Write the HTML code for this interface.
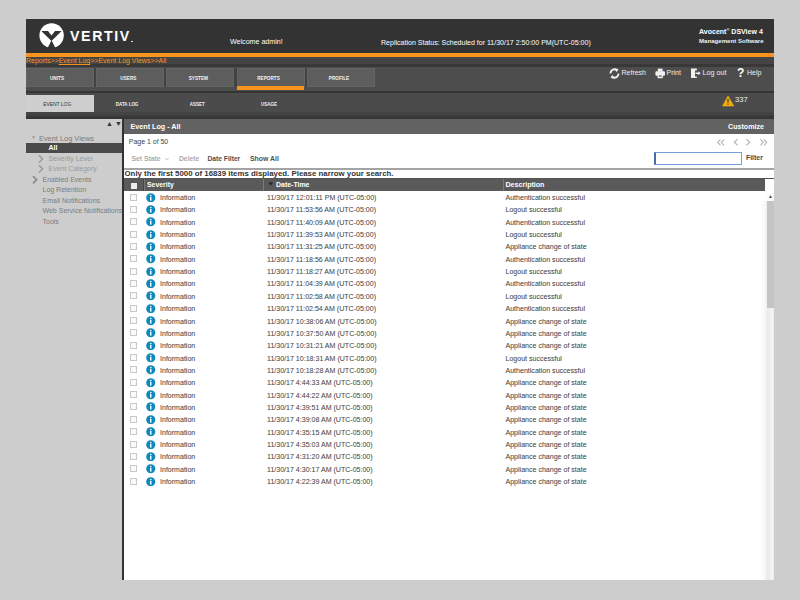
<!DOCTYPE html>
<html><head><meta charset="utf-8">
<style>
*{margin:0;padding:0;box-sizing:border-box}
html,body{width:800px;height:600px;overflow:hidden;background:#cdcdcd;font-family:"Liberation Sans",sans-serif;position:relative}
.a{position:absolute}
.t{position:absolute;white-space:nowrap;line-height:1}
.row{position:absolute;left:124px;width:642px;height:12px}
.row .cb{position:absolute;left:6px;top:2.5px;width:7px;height:7px;border:1px solid #c8c8c8;background:#fafafa}
.row .ico{position:absolute;left:22.2px;top:1.5px;width:9.5px;height:9.5px}
.row span{position:absolute;top:3px;font-size:7.05px;color:#555;text-shadow:0 0 0.6px rgba(80,80,80,0.35);line-height:1;white-space:nowrap}
.row .sev{left:36px}
.row .dt{left:143px}
.row .ds{left:381.5px}
.tab{position:absolute;top:67.5px;height:19.5px;width:68px;background:#5d5d5d;border:1px solid #646464;color:#f4f4f4;font-size:6px;font-weight:bold;text-align:center;line-height:19.5px;padding-right:4px}
.tab b{display:inline-block;transform:scaleX(0.78)}
.sub{position:absolute;top:95px;height:17px;color:#f2f2f2;font-size:5.6px;font-weight:bold;text-align:center;line-height:18.5px;padding-right:5px}
.sub b{display:inline-block;transform:scaleX(0.8)}
.nl{position:absolute;left:42.5px;font-size:7px;color:#7c7c7c;white-space:nowrap;line-height:1}
</style></head><body>
<!-- header -->
<div class="a" style="left:26px;top:19px;width:748px;height:34px;background:#333"></div>
<svg class="a" style="left:36px;top:21px" width="30" height="30" viewBox="36 21 30 30">
 <circle cx="51.6" cy="35.5" r="12.2" fill="#fff"/>
 <polygon points="41.3,31 48,31 51.5,35.6 55,31 61.6,31 51.5,41" fill="#333"/>
 <polygon points="51.5,40.2 47.4,48.5 55.6,48.5" fill="#333"/>
</svg>
<div class="t" style="left:70px;top:28.6px;font-size:14.2px;font-weight:bold;color:#fff;letter-spacing:1.6px">VERTIV</div>
<div class="a" style="left:131px;top:40.5px;width:1.5px;height:1.5px;background:#ddd"></div>
<div class="t" style="left:230px;top:39px;font-size:7.1px;color:#fff">Welcome admin!</div>
<div class="t" style="left:381px;top:38.5px;font-size:7.04px;color:#fff">Replication Status: Scheduled for 11/30/17 2:50:00 PM(UTC-05:00)</div>
<div class="t" style="left:699px;top:28px;font-size:7.02px;font-weight:bold;color:#fff">Avocent<sup style="font-size:4px">®</sup> DSView 4</div>
<div class="t" style="left:699px;top:38.3px;font-size:6px;font-weight:bold;color:#f4f4f4;letter-spacing:0.05px">Management Software</div>
<!-- orange -->
<div class="a" style="left:26px;top:53.3px;width:748px;height:3.5px;background:#f7941d"></div>
<div class="a" style="left:26px;top:56.5px;width:748px;height:9px;background:#444"></div>
<div class="a" style="left:26px;top:64.3px;width:748px;height:3.2px;background:#383838"></div>
<div class="t" style="left:26px;top:57px;font-size:7px;color:#f7941d">Reports&gt;&gt;<u>Event Log</u>&gt;&gt;Event Log Views&gt;&gt;All</div>
<!-- nav band -->
<div class="a" style="left:26px;top:67px;width:748px;height:24px;background:#4d4d4d"></div>
<div class="tab" style="left:26px;padding-right:6px"><b>UNITS</b></div>
<div class="tab" style="left:96px"><b>USERS</b></div>
<div class="tab" style="left:166px"><b>SYSTEM</b></div>
<div class="tab" style="left:237px"><b>REPORTS</b></div>
<div class="a" style="left:237px;top:86px;width:67px;height:3.5px;background:#f7941d"></div>
<div class="tab" style="left:307px"><b>PROFILE</b></div>
<div class="a" style="left:94px;top:68px;width:2px;height:19px;background:#424242"></div><div class="a" style="left:164px;top:68px;width:2px;height:19px;background:#424242"></div><div class="a" style="left:234px;top:68px;width:3px;height:19px;background:#424242"></div><div class="a" style="left:305px;top:68px;width:2px;height:19px;background:#424242"></div>
<div class="a" style="left:26px;top:90.7px;width:748px;height:2.2px;background:#353535"></div>
<!-- right tools -->
<svg class="a" style="left:609px;top:68px" width="11" height="11" viewBox="0 0 11 11"><path d="M7.6 1.9 A4 4 0 0 0 1.5 5.5" fill="none" stroke="#eee" stroke-width="1.9"/><path d="M3.4 9.1 A4 4 0 0 0 9.5 5.5" fill="none" stroke="#eee" stroke-width="1.9"/><path d="M6.2 0.2 L9.6 1.6 L7.2 4.2 Z" fill="#eee"/><path d="M4.8 10.8 L1.4 9.4 L3.8 6.8 Z" fill="#eee"/></svg>
<div class="t" style="left:621.5px;top:68.5px;font-size:7px;color:#eee">Refresh</div>
<svg class="a" style="left:655px;top:68px" width="11" height="11" viewBox="0 0 11 11"><rect x="2.8" y="0.6" width="4.8" height="3" fill="#f0f0f0"/><rect x="0.4" y="3.2" width="9.6" height="4.6" rx="1.2" fill="#f0f0f0"/><rect x="2.6" y="6.2" width="5.2" height="4" fill="#f0f0f0"/><rect x="3.8" y="7.2" width="2.8" height="1.6" fill="#777"/></svg>
<div class="t" style="left:666.5px;top:68.5px;font-size:7px;color:#eee">Print</div>
<svg class="a" style="left:690px;top:68px" width="12" height="11" viewBox="0 0 12 11"><path d="M1 0.5 H6.8 V2.6 H5 V8.4 H6.8 V10 H1 Z" fill="#f0f0f0"/><path d="M5.5 5.3 H9.5" stroke="#f0f0f0" stroke-width="1.5"/><path d="M8.3 3.3 L10.6 5.3 L8.3 7.3 Z" fill="#f0f0f0"/></svg>
<div class="t" style="left:702.5px;top:68.5px;font-size:7.19px;color:#eee">Log out</div>
<div class="t" style="left:737px;top:67px;font-size:12px;font-weight:bold;color:#fff">?</div>
<div class="t" style="left:747px;top:68.5px;font-size:7px;color:#eee">Help</div>
<!-- sub band -->
<div class="a" style="left:26px;top:93px;width:748px;height:20px;background:#4b4b4b"></div>
<div class="a" style="left:26px;top:94.8px;width:67.5px;height:17px;background:#cfcfcf"></div>
<div class="sub" style="left:26px;width:67.5px;color:#333;font-weight:normal;font-size:4.9px;line-height:19px">EVENT LOG</div>
<div class="sub" style="left:96px;width:68px"><b>DATA LOG</b></div>
<div class="sub" style="left:166px;width:68px"><b>ASSET</b></div>
<div class="sub" style="left:237px;width:68px"><b>USAGE</b></div>
<svg class="a" style="left:722px;top:95px" width="12" height="12" viewBox="0 0 12 12"><path d="M6 1 L11.8 11 L0.5 11 Z" fill="#f2ad0c" stroke="#f2ad0c" stroke-width="0.6" stroke-linejoin="round"/><path d="M5.3 4 L6.7 4 L6.4 8 L5.6 8 Z" fill="#3a3a3a"/><rect x="5.45" y="8.6" width="1.1" height="1.1" fill="#3a3a3a"/></svg>
<div class="t" style="left:735px;top:95.8px;font-size:7.6px;color:#eee">337</div>
<div class="a" style="left:26px;top:112px;width:748px;height:7px;background:linear-gradient(#444 0px,#444 2px,#3c3c3c 4px,#363636 5px,#363636 7px)"></div>
<!-- sidebar -->
<div class="a" style="left:26px;top:119px;width:96px;height:461px;background:#cdcdcd"></div>
<div class="t" style="left:106px;top:120px;font-size:7px;color:#333">&#9650;</div>
<div class="t" style="left:115px;top:120px;font-size:7px;color:#333">&#9660;</div>
<div class="t" style="left:31px;top:134.5px;font-size:5px;color:#999">&#9660;</div>
<div class="t" style="left:39px;top:134.5px;font-size:7.4px;color:#7c7c7c">Event Log Views</div>
<div class="a" style="left:26px;top:143px;width:96px;height:9.5px;background:#4a4a4a"></div>
<div class="t" style="left:48.5px;top:144.3px;font-size:7px;font-weight:bold;color:#fff">All</div>
<svg class="a" style="left:38px;top:154px" width="6" height="10" viewBox="0 0 6 10"><path d="M1 1.2 L4.6 4.8 L1 8.4" fill="none" stroke="#999" stroke-width="1.4"/></svg>
<div class="nl" style="left:48.5px;top:154.5px;color:#9a9a9a">Severity Level</div>
<svg class="a" style="left:38px;top:163.8px" width="6" height="10" viewBox="0 0 6 10"><path d="M1 1.2 L4.6 4.8 L1 8.4" fill="none" stroke="#999" stroke-width="1.4"/></svg>
<div class="nl" style="left:48.5px;top:165px;color:#9a9a9a">Event Category</div>
<svg class="a" style="left:31.5px;top:174.6px" width="6" height="10" viewBox="0 0 6 10"><path d="M1 1.2 L4.6 4.8 L1 8.4" fill="none" stroke="#858585" stroke-width="1.6"/></svg>
<div class="nl" style="top:175.5px">Enabled Events</div>
<div class="nl" style="top:186px">Log Retention</div>
<div class="nl" style="top:196.5px">Email Notifications</div>
<div class="nl" style="top:207px">Web Service Notifications</div>
<div class="nl" style="top:217.5px">Tools</div>
<!-- separator -->
<div class="a" style="left:122px;top:119px;width:2.3px;height:461px;background:#333"></div>
<!-- main panel -->
<div class="a" style="left:124px;top:119px;width:650px;height:461px;background:#fff"></div>
<div class="a" style="left:124px;top:119px;width:650px;height:14.5px;background:#626262"></div>
<div class="t" style="left:130.5px;top:124px;font-size:7.18px;font-weight:bold;color:#fff">Event Log - All</div>
<div class="t" style="left:728px;top:124px;font-size:7.12px;font-weight:bold;color:#fff">Customize</div>
<div class="t" style="left:128.8px;top:138.6px;font-size:6.96px;color:#444">Page 1 of 50</div>




<svg class="a" style="left:715px;top:138px" width="55" height="9" viewBox="715 138 55 9"><g fill="none" stroke="#b8b8b8" stroke-width="1.25"><path d="M720.5 139.3 L717.8 142.3 L720.5 145.3 M724 139.3 L721.3 142.3 L724 145.3"/><path d="M737.5 139.3 L734.3 142.3 L737.5 145.3"/><path d="M746.5 139.3 L749.7 142.3 L746.5 145.3"/><path d="M760.5 139.3 L763.2 142.3 L760.5 145.3 M764 139.3 L766.7 142.3 L764 145.3"/></g></svg>
<div class="t" style="left:131.5px;top:155.5px;font-size:6.8px;font-weight:bold;color:#acacac">Set State</div><svg class="a" style="left:164.5px;top:157px" width="4" height="4" viewBox="0 0 4 4"><path d="M0.3 1 L2 2.8 L3.7 1" fill="none" stroke="#b4b4b4" stroke-width="0.9"/></svg>
<div class="t" style="left:179px;top:155.5px;font-size:6.75px;font-weight:bold;color:#acacac">Delete</div>
<div class="t" style="left:207.5px;top:155.7px;font-size:6.7px;font-weight:bold;color:#505050">Date Filter</div>
<div class="t" style="left:250px;top:155.7px;font-size:6.9px;font-weight:bold;color:#505050">Show All</div>
<div class="a" style="left:654px;top:152px;width:88px;height:12.5px;border:1.5px solid #78a0d8;border-left:2px solid #4a6aa8;background:#fff"></div>
<div class="t" style="left:746px;top:155.3px;font-size:6.9px;font-weight:bold;color:#484848">Filter</div>
<div class="a" style="left:124px;top:168px;width:650px;height:1.5px;background:#a4a4a4"></div>
<div class="t" style="left:124.5px;top:169.5px;font-size:7.85px;font-weight:bold;color:#333">Only the first 5000 of 16839 items displayed. Please narrow your search.</div>
<!-- table header -->
<div class="a" style="left:124px;top:178px;width:650px;height:1px;background:#555"></div>
<div class="a" style="left:124px;top:178.5px;width:641px;height:12.5px;background:#5a5a5a"></div>
<div class="a" style="left:143px;top:178.5px;width:1px;height:12.5px;background:#444"></div><div class="a" style="left:144px;top:178.5px;width:1px;height:12.5px;background:#777"></div>
<div class="a" style="left:263px;top:178.5px;width:1.2px;height:12.5px;background:#7a7a7a"></div>
<div class="a" style="left:503px;top:178.5px;width:1.2px;height:12.5px;background:#7a7a7a"></div>
<div class="a" style="left:131px;top:182.5px;width:6px;height:6px;background:#eee"></div>
<div class="t" style="left:147px;top:181.8px;font-size:6.9px;font-weight:bold;color:#fff">Severity</div>
<svg class="a" style="left:268px;top:182px" width="6" height="5" viewBox="0 0 6 5"><path d="M0.4 0.3 L5.2 0.3 L2.8 3.8 Z" fill="#2a2a2a"/></svg>
<div class="t" style="left:276px;top:181.8px;font-size:6.96px;font-weight:bold;color:#fff">Date-Time</div>
<div class="t" style="left:505.5px;top:181.8px;font-size:7.09px;font-weight:bold;color:#fff">Description</div>
<!-- scrollbar -->
<div class="a" style="left:760px;top:201px;width:14px;height:379px;background:linear-gradient(90deg,rgba(255,255,255,0) 0px,#fafafa 3px,#f6f6f6 5.5px,#ececec 7px,#ededed 10px,#f4f4f4 11.5px,#f3f3f3 13px,#e8e8e8 14px)"></div>
<div class="a" style="left:766.5px;top:192.5px;width:7.5px;height:8.5px;background:#fafafa"></div>
<div class="t" style="left:768px;top:193.5px;font-size:5px;color:#555">&#9650;</div>
<div class="a" style="left:767px;top:201px;width:7px;height:107px;background:#c4c4c4"></div>
<div class="row" style="top:191.00px"><i class="cb"></i><svg class="ico" viewBox="0 0 10 10"><circle cx="5" cy="5" r="4.8" fill="#0f89b9"/><circle cx="5" cy="2.6" r="0.85" fill="#fff"/><rect x="4.25" y="4" width="1.5" height="4" fill="#fff"/></svg><span class="sev">Information</span><span class="dt">11/30/17 12:01:11 PM (UTC-05:00)</span><span class="ds">Authentication successful</span></div>
<div class="row" style="top:203.35px"><i class="cb"></i><svg class="ico" viewBox="0 0 10 10"><circle cx="5" cy="5" r="4.8" fill="#0f89b9"/><circle cx="5" cy="2.6" r="0.85" fill="#fff"/><rect x="4.25" y="4" width="1.5" height="4" fill="#fff"/></svg><span class="sev">Information</span><span class="dt">11/30/17 11:53:56 AM (UTC-05:00)</span><span class="ds">Logout successful</span></div>
<div class="row" style="top:215.70px"><i class="cb"></i><svg class="ico" viewBox="0 0 10 10"><circle cx="5" cy="5" r="4.8" fill="#0f89b9"/><circle cx="5" cy="2.6" r="0.85" fill="#fff"/><rect x="4.25" y="4" width="1.5" height="4" fill="#fff"/></svg><span class="sev">Information</span><span class="dt">11/30/17 11:40:09 AM (UTC-05:00)</span><span class="ds">Authentication successful</span></div>
<div class="row" style="top:228.05px"><i class="cb"></i><svg class="ico" viewBox="0 0 10 10"><circle cx="5" cy="5" r="4.8" fill="#0f89b9"/><circle cx="5" cy="2.6" r="0.85" fill="#fff"/><rect x="4.25" y="4" width="1.5" height="4" fill="#fff"/></svg><span class="sev">Information</span><span class="dt">11/30/17 11:39:53 AM (UTC-05:00)</span><span class="ds">Logout successful</span></div>
<div class="row" style="top:240.40px"><i class="cb"></i><svg class="ico" viewBox="0 0 10 10"><circle cx="5" cy="5" r="4.8" fill="#0f89b9"/><circle cx="5" cy="2.6" r="0.85" fill="#fff"/><rect x="4.25" y="4" width="1.5" height="4" fill="#fff"/></svg><span class="sev">Information</span><span class="dt">11/30/17 11:31:25 AM (UTC-05:00)</span><span class="ds">Appliance change of state</span></div>
<div class="row" style="top:252.75px"><i class="cb"></i><svg class="ico" viewBox="0 0 10 10"><circle cx="5" cy="5" r="4.8" fill="#0f89b9"/><circle cx="5" cy="2.6" r="0.85" fill="#fff"/><rect x="4.25" y="4" width="1.5" height="4" fill="#fff"/></svg><span class="sev">Information</span><span class="dt">11/30/17 11:18:56 AM (UTC-05:00)</span><span class="ds">Authentication successful</span></div>
<div class="row" style="top:265.10px"><i class="cb"></i><svg class="ico" viewBox="0 0 10 10"><circle cx="5" cy="5" r="4.8" fill="#0f89b9"/><circle cx="5" cy="2.6" r="0.85" fill="#fff"/><rect x="4.25" y="4" width="1.5" height="4" fill="#fff"/></svg><span class="sev">Information</span><span class="dt">11/30/17 11:18:27 AM (UTC-05:00)</span><span class="ds">Logout successful</span></div>
<div class="row" style="top:277.45px"><i class="cb"></i><svg class="ico" viewBox="0 0 10 10"><circle cx="5" cy="5" r="4.8" fill="#0f89b9"/><circle cx="5" cy="2.6" r="0.85" fill="#fff"/><rect x="4.25" y="4" width="1.5" height="4" fill="#fff"/></svg><span class="sev">Information</span><span class="dt">11/30/17 11:04:39 AM (UTC-05:00)</span><span class="ds">Authentication successful</span></div>
<div class="row" style="top:289.80px"><i class="cb"></i><svg class="ico" viewBox="0 0 10 10"><circle cx="5" cy="5" r="4.8" fill="#0f89b9"/><circle cx="5" cy="2.6" r="0.85" fill="#fff"/><rect x="4.25" y="4" width="1.5" height="4" fill="#fff"/></svg><span class="sev">Information</span><span class="dt">11/30/17 11:02:58 AM (UTC-05:00)</span><span class="ds">Logout successful</span></div>
<div class="row" style="top:302.15px"><i class="cb"></i><svg class="ico" viewBox="0 0 10 10"><circle cx="5" cy="5" r="4.8" fill="#0f89b9"/><circle cx="5" cy="2.6" r="0.85" fill="#fff"/><rect x="4.25" y="4" width="1.5" height="4" fill="#fff"/></svg><span class="sev">Information</span><span class="dt">11/30/17 11:02:54 AM (UTC-05:00)</span><span class="ds">Authentication successful</span></div>
<div class="row" style="top:314.50px"><i class="cb"></i><svg class="ico" viewBox="0 0 10 10"><circle cx="5" cy="5" r="4.8" fill="#0f89b9"/><circle cx="5" cy="2.6" r="0.85" fill="#fff"/><rect x="4.25" y="4" width="1.5" height="4" fill="#fff"/></svg><span class="sev">Information</span><span class="dt">11/30/17 10:38:06 AM (UTC-05:00)</span><span class="ds">Appliance change of state</span></div>
<div class="row" style="top:326.85px"><i class="cb"></i><svg class="ico" viewBox="0 0 10 10"><circle cx="5" cy="5" r="4.8" fill="#0f89b9"/><circle cx="5" cy="2.6" r="0.85" fill="#fff"/><rect x="4.25" y="4" width="1.5" height="4" fill="#fff"/></svg><span class="sev">Information</span><span class="dt">11/30/17 10:37:50 AM (UTC-05:00)</span><span class="ds">Appliance change of state</span></div>
<div class="row" style="top:339.20px"><i class="cb"></i><svg class="ico" viewBox="0 0 10 10"><circle cx="5" cy="5" r="4.8" fill="#0f89b9"/><circle cx="5" cy="2.6" r="0.85" fill="#fff"/><rect x="4.25" y="4" width="1.5" height="4" fill="#fff"/></svg><span class="sev">Information</span><span class="dt">11/30/17 10:31:21 AM (UTC-05:00)</span><span class="ds">Appliance change of state</span></div>
<div class="row" style="top:351.55px"><i class="cb"></i><svg class="ico" viewBox="0 0 10 10"><circle cx="5" cy="5" r="4.8" fill="#0f89b9"/><circle cx="5" cy="2.6" r="0.85" fill="#fff"/><rect x="4.25" y="4" width="1.5" height="4" fill="#fff"/></svg><span class="sev">Information</span><span class="dt">11/30/17 10:18:31 AM (UTC-05:00)</span><span class="ds">Logout successful</span></div>
<div class="row" style="top:363.90px"><i class="cb"></i><svg class="ico" viewBox="0 0 10 10"><circle cx="5" cy="5" r="4.8" fill="#0f89b9"/><circle cx="5" cy="2.6" r="0.85" fill="#fff"/><rect x="4.25" y="4" width="1.5" height="4" fill="#fff"/></svg><span class="sev">Information</span><span class="dt">11/30/17 10:18:28 AM (UTC-05:00)</span><span class="ds">Authentication successful</span></div>
<div class="row" style="top:376.25px"><i class="cb"></i><svg class="ico" viewBox="0 0 10 10"><circle cx="5" cy="5" r="4.8" fill="#0f89b9"/><circle cx="5" cy="2.6" r="0.85" fill="#fff"/><rect x="4.25" y="4" width="1.5" height="4" fill="#fff"/></svg><span class="sev">Information</span><span class="dt">11/30/17 4:44:33 AM (UTC-05:00)</span><span class="ds">Appliance change of state</span></div>
<div class="row" style="top:388.60px"><i class="cb"></i><svg class="ico" viewBox="0 0 10 10"><circle cx="5" cy="5" r="4.8" fill="#0f89b9"/><circle cx="5" cy="2.6" r="0.85" fill="#fff"/><rect x="4.25" y="4" width="1.5" height="4" fill="#fff"/></svg><span class="sev">Information</span><span class="dt">11/30/17 4:44:22 AM (UTC-05:00)</span><span class="ds">Appliance change of state</span></div>
<div class="row" style="top:400.95px"><i class="cb"></i><svg class="ico" viewBox="0 0 10 10"><circle cx="5" cy="5" r="4.8" fill="#0f89b9"/><circle cx="5" cy="2.6" r="0.85" fill="#fff"/><rect x="4.25" y="4" width="1.5" height="4" fill="#fff"/></svg><span class="sev">Information</span><span class="dt">11/30/17 4:39:51 AM (UTC-05:00)</span><span class="ds">Appliance change of state</span></div>
<div class="row" style="top:413.30px"><i class="cb"></i><svg class="ico" viewBox="0 0 10 10"><circle cx="5" cy="5" r="4.8" fill="#0f89b9"/><circle cx="5" cy="2.6" r="0.85" fill="#fff"/><rect x="4.25" y="4" width="1.5" height="4" fill="#fff"/></svg><span class="sev">Information</span><span class="dt">11/30/17 4:39:08 AM (UTC-05:00)</span><span class="ds">Appliance change of state</span></div>
<div class="row" style="top:425.65px"><i class="cb"></i><svg class="ico" viewBox="0 0 10 10"><circle cx="5" cy="5" r="4.8" fill="#0f89b9"/><circle cx="5" cy="2.6" r="0.85" fill="#fff"/><rect x="4.25" y="4" width="1.5" height="4" fill="#fff"/></svg><span class="sev">Information</span><span class="dt">11/30/17 4:35:15 AM (UTC-05:00)</span><span class="ds">Appliance change of state</span></div>
<div class="row" style="top:438.00px"><i class="cb"></i><svg class="ico" viewBox="0 0 10 10"><circle cx="5" cy="5" r="4.8" fill="#0f89b9"/><circle cx="5" cy="2.6" r="0.85" fill="#fff"/><rect x="4.25" y="4" width="1.5" height="4" fill="#fff"/></svg><span class="sev">Information</span><span class="dt">11/30/17 4:35:03 AM (UTC-05:00)</span><span class="ds">Appliance change of state</span></div>
<div class="row" style="top:450.35px"><i class="cb"></i><svg class="ico" viewBox="0 0 10 10"><circle cx="5" cy="5" r="4.8" fill="#0f89b9"/><circle cx="5" cy="2.6" r="0.85" fill="#fff"/><rect x="4.25" y="4" width="1.5" height="4" fill="#fff"/></svg><span class="sev">Information</span><span class="dt">11/30/17 4:31:20 AM (UTC-05:00)</span><span class="ds">Appliance change of state</span></div>
<div class="row" style="top:462.70px"><i class="cb"></i><svg class="ico" viewBox="0 0 10 10"><circle cx="5" cy="5" r="4.8" fill="#0f89b9"/><circle cx="5" cy="2.6" r="0.85" fill="#fff"/><rect x="4.25" y="4" width="1.5" height="4" fill="#fff"/></svg><span class="sev">Information</span><span class="dt">11/30/17 4:30:17 AM (UTC-05:00)</span><span class="ds">Appliance change of state</span></div>
<div class="row" style="top:475.05px"><i class="cb"></i><svg class="ico" viewBox="0 0 10 10"><circle cx="5" cy="5" r="4.8" fill="#0f89b9"/><circle cx="5" cy="2.6" r="0.85" fill="#fff"/><rect x="4.25" y="4" width="1.5" height="4" fill="#fff"/></svg><span class="sev">Information</span><span class="dt">11/30/17 4:22:39 AM (UTC-05:00)</span><span class="ds">Appliance change of state</span></div>
</body></html>
